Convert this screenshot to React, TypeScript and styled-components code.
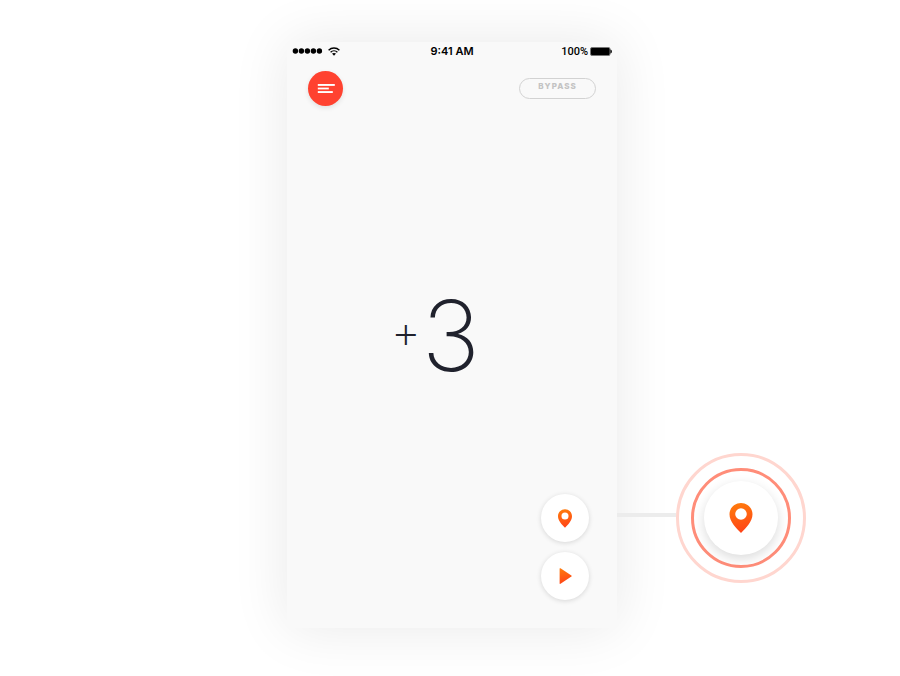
import React from "react";
import styled, { createGlobalStyle } from "styled-components";

const GlobalStyle = createGlobalStyle`
  *, *::before, *::after { box-sizing: border-box; }
  body { margin: 0; background: #fff; font-family: Inter, "Liberation Sans", sans-serif; }
`;

const Page = styled.div`
  min-height: 100vh;
  display: grid;
  grid-template-columns: minmax(0, 1fr) minmax(280px, 330px) minmax(0, 1fr);
  padding: 42px 0 48px 4px;
  overflow: hidden;
`;

const Phone = styled.main`
  grid-column: 2;
  display: flex;
  flex-direction: column;
  background: #f9f9f9;
  box-shadow: 0 0 54px rgba(0, 0, 0, 0.09);
`;

const StatusBar = styled.div`
  display: grid;
  grid-template-columns: 1fr auto 1fr;
  align-items: center;
  height: 18px;
  padding: 0 5px;
  color: #000;
  font-size: 11px;
  line-height: 18px;
`;

const Signal = styled.div`
  display: flex;
  align-items: center;
  gap: 5px;
`;

const Time = styled.time`
  font-weight: 600;
`;

const Battery = styled.div`
  display: flex;
  align-items: center;
  justify-content: flex-end;
  gap: 2px;
  font-family: Roboto, "Liberation Sans", sans-serif;
  font-weight: 500;
`;

const Charge = styled.span`
  padding-top: 2px;
  line-height: 16px;
`;

const Header = styled.header`
  display: flex;
  align-items: center;
  justify-content: space-between;
  padding: 11px 21px;
`;

const RoundButton = styled.button<{ $size: number; $tone?: string; $shadow?: string }>`
  display: grid;
  place-items: center;
  width: ${(p) => p.$size}px;
  height: ${(p) => p.$size}px;
  padding: 0;
  border: 0;
  border-radius: 50%;
  background: ${(p) => p.$tone ?? "#fff"};
  box-shadow: ${(p) => p.$shadow ?? "0 1px 5px rgba(0, 0, 0, 0.14)"};
  cursor: pointer;
`;

const BypassButton = styled.button`
  width: 77px;
  height: 21px;
  padding: 0 0 4px;
  border: 1px solid #d2d2d2;
  border-radius: 11px;
  background: transparent;
  color: #c3c3c3;
  font: 800 8px/15px Inter, "Liberation Sans", sans-serif;
  letter-spacing: 1px;
  cursor: pointer;
`;

const Score = styled.div`
  flex: 1;
  display: flex;
  align-items: center;
  justify-content: center;
  gap: 1px;
  padding: 60px 33px 0 0;
  color: #20222d;
`;

const Sign = styled.span`
  padding-bottom: 10px;
  font-size: 46px;
  font-weight: 200;
  line-height: 48px;
`;

const Digit = styled.span`
  font-size: 98px;
  font-weight: 200;
  line-height: 100px;
`;

const Actions = styled.div`
  display: flex;
  flex-direction: column;
  align-items: flex-end;
  gap: 10px;
  padding: 0 28px 28px;
`;

const Callout = styled.aside`
  grid-column: 3;
  align-self: end;
  display: flex;
  align-items: center;
  margin-bottom: 45px;
`;

const Connector = styled.div`
  width: 59px;
  height: 4px;
  margin-bottom: 6px;
  background: #ececec;
`;

const Ring = styled.div<{ $size: number; $color: string }>`
  flex: none;
  display: grid;
  place-items: center;
  width: ${(p) => p.$size}px;
  height: ${(p) => p.$size}px;
  border: 3px solid ${(p) => p.$color};
  border-radius: 50%;
`;

function PinIcon({ id, width, height }: { id: string; width: number; height: number }) {
  return (
    <svg width={width} height={height} viewBox="0 0 23 30" aria-hidden="true">
      <defs>
        <linearGradient id={id} x1="0.4" y1="0" x2="0.6" y2="1">
          <stop offset="0" stopColor="#ff7a0c" />
          <stop offset="1" stopColor="#ff4218" />
        </linearGradient>
      </defs>
      <path
        fill={`url(#${id})`}
        fillRule="evenodd"
        d="M11.5 0C5 0 0 5 0 11.2C0 18.5 6.5 25 11.5 30C16.5 25 23 18.5 23 11.2C23 5 18 0 11.5 0ZM11.5 5.2A5.8 5.8 0 1 1 11.5 16.8A5.8 5.8 0 1 1 11.5 5.2Z"
      />
    </svg>
  );
}

export default function App() {
  return (
    <>
      <GlobalStyle />
      <Page>
        <Phone>
          <StatusBar>
            <Signal>
              <svg width="31" height="6" viewBox="0 0 31 6" aria-hidden="true">
                {[3, 9, 15, 21, 27].map((x) => (
                  <circle key={x} cx={x + 0.4} cy="3" r="2.7" />
                ))}
              </svg>
              <svg width="12" height="9" viewBox="0 0 12 9" fill="none" stroke="#000" strokeWidth="1.4" aria-hidden="true">
                <path d="M0.6 3.3C3.6 0.3 8.4 0.3 11.4 3.3M2.6 5.2C4.5 3.4 7.5 3.4 9.4 5.2" />
                <path fill="#000" stroke="none" d="M4 6.6C5.1 5.7 6.9 5.7 8 6.6L6 8.7Z" />
              </svg>
            </Signal>
            <Time>9:41 AM</Time>
            <Battery>
              <Charge>100%</Charge>
              <svg width="22" height="9" viewBox="0 0 22 9" aria-hidden="true">
                <rect x="0.5" y="0.5" width="19.5" height="8" rx="1.5" fill="#000" stroke="#777" />
                <path d="M20.4 2.6C22.4 3 22.4 6 20.4 6.4Z" />
              </svg>
            </Battery>
          </StatusBar>
          <Header>
            <RoundButton $size={35} $tone="#ff4230" $shadow="0 2px 5px rgba(0, 0, 0, 0.1)" aria-label="Menu">
              <svg width="19" height="9" viewBox="0 0 19 9" fill="#fff" aria-hidden="true">
                <rect x="1.8" width="17" height="1.9" />
                <rect x="1.8" y="3.6" width="11" height="1.8" />
                <rect x="1.8" y="7.1" width="15" height="1.9" />
              </svg>
            </RoundButton>
            <BypassButton>BYPASS</BypassButton>
          </Header>
          <Score>
            <Sign>+</Sign>
            <Digit>3</Digit>
          </Score>
          <Actions>
            <RoundButton $size={48} aria-label="Location">
              <PinIcon id="pin-small" width={14} height={19} />
            </RoundButton>
            <RoundButton $size={48} aria-label="Play">
              <svg width="14" height="16" viewBox="0 0 14 16" aria-hidden="true">
                <defs>
                  <linearGradient id="play" x1="0.3" y1="0" x2="0.5" y2="1">
                    <stop offset="0" stopColor="#ff7a0c" />
                    <stop offset="1" stopColor="#ff4218" />
                  </linearGradient>
                </defs>
                <path
                  fill="url(#play)"
                  d="M1.6 0.8Q1.6 -0.2 2.5 0.3L13.4 7.6Q14 8.1 13.4 8.6L2.5 15.8Q1.6 16.2 1.6 15.3Z"
                />
              </svg>
            </RoundButton>
          </Actions>
        </Phone>
        <Callout>
          <Connector />
          <Ring $size={130} $color="#ffd6cf">
            <Ring $size={100} $color="#ff8d79">
              <RoundButton $size={74} $shadow="0 4px 12px rgba(0, 0, 0, 0.14)" aria-label="Location, enlarged">
                <PinIcon id="pin-large" width={24} height={30} />
              </RoundButton>
            </Ring>
          </Ring>
        </Callout>
      </Page>
    </>
  );
}
